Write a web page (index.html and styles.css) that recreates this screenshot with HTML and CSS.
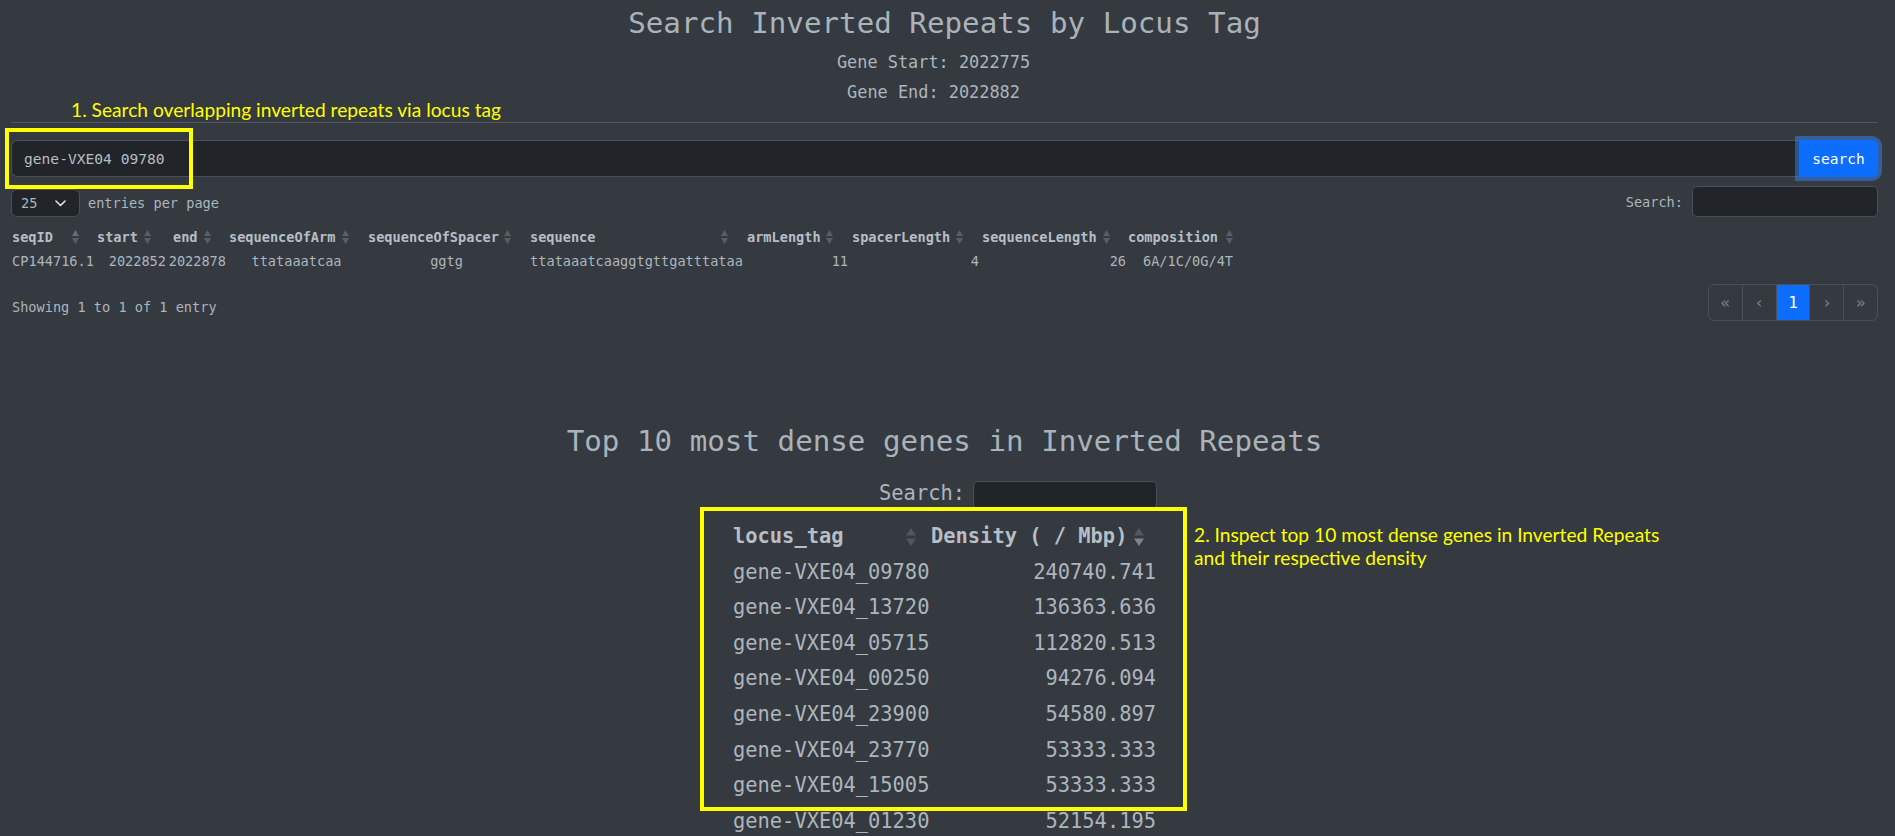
FILE: index.html
```html
<!DOCTYPE html>
<html lang="en">
<head>
<meta charset="utf-8">
<title>Search Inverted Repeats by Locus Tag</title>
<link rel="stylesheet" href="styles.css">
</head>
<body>
<main class="page">
  <header class="intro">
    <h1 class="title">Search Inverted Repeats by Locus Tag</h1>
    <p class="gene-line gene-start">Gene Start: 2022775</p>
    <p class="gene-line">Gene End: 2022882</p>
  </header>
  <hr class="rule">
  <form class="locus-form">
    <input class="locus-input" type="text" value="gene-VXE04_09780">
    <button class="btn-search" type="button">search</button>
  </form>

  <div class="dt-top">
    <div class="length">
      <span class="select">25<svg class="chev" width="11" height="7" viewBox="0 0 11 7"><path d="M1 1l4.5 4.5L10 1" fill="none" stroke="#dee2e6" stroke-width="1.6" stroke-linecap="round" stroke-linejoin="round"/></svg></span>
      <span>entries per page</span>
    </div>
    <label class="dt-search">Search:<span class="search-box"></span></label>
  </div>

  <div class="ir-table">
    <div class="th">seqID<svg class="sort" width="7" height="14" viewBox="0 0 7 14"><polygon points="0,6 3.5,0 7,6" class="s-up"/><polygon points="0,8 3.5,14 7,8"/></svg></div>
    <div class="th">start<svg class="sort" width="7" height="14" viewBox="0 0 7 14"><polygon points="0,6 3.5,0 7,6"/><polygon points="0,8 3.5,14 7,8"/></svg></div>
    <div class="th">end<svg class="sort" width="7" height="14" viewBox="0 0 7 14"><polygon points="0,6 3.5,0 7,6"/><polygon points="0,8 3.5,14 7,8"/></svg></div>
    <div class="th">sequenceOfArm<svg class="sort" width="7" height="14" viewBox="0 0 7 14"><polygon points="0,6 3.5,0 7,6"/><polygon points="0,8 3.5,14 7,8"/></svg></div>
    <div class="th">sequenceOfSpacer<svg class="sort" width="7" height="14" viewBox="0 0 7 14"><polygon points="0,6 3.5,0 7,6"/><polygon points="0,8 3.5,14 7,8"/></svg></div>
    <div class="th">sequence<svg class="sort" width="7" height="14" viewBox="0 0 7 14"><polygon points="0,6 3.5,0 7,6"/><polygon points="0,8 3.5,14 7,8"/></svg></div>
    <div class="th">armLength<svg class="sort" width="7" height="14" viewBox="0 0 7 14"><polygon points="0,6 3.5,0 7,6"/><polygon points="0,8 3.5,14 7,8"/></svg></div>
    <div class="th">spacerLength<svg class="sort" width="7" height="14" viewBox="0 0 7 14"><polygon points="0,6 3.5,0 7,6"/><polygon points="0,8 3.5,14 7,8"/></svg></div>
    <div class="th">sequenceLength<svg class="sort" width="7" height="14" viewBox="0 0 7 14"><polygon points="0,6 3.5,0 7,6"/><polygon points="0,8 3.5,14 7,8"/></svg></div>
    <div class="th">composition<svg class="sort" width="7" height="14" viewBox="0 0 7 14"><polygon points="0,6 3.5,0 7,6"/><polygon points="0,8 3.5,14 7,8"/></svg></div>

    <div class="td">CP144716.1</div>
    <div class="td num">2022852</div>
    <div class="td num">2022878</div>
    <div class="td">ttataaatcaa</div>
    <div class="td">ggtg</div>
    <div class="td">ttataaatcaaggtgttgatttataa</div>
    <div class="td num">11</div>
    <div class="td num num-tight">4</div>
    <div class="td num">26</div>
    <div class="td">6A/1C/0G/4T</div>
  </div>

  <div class="dt-bottom">
    <div class="info">Showing 1 to 1 of 1 entry</div>
    <nav class="pager">
      <span class="page-item">«</span>
      <span class="page-item">‹</span>
      <span class="page-item active">1</span>
      <span class="page-item">›</span>
      <span class="page-item">»</span>
    </nav>
  </div>

  <section class="dense">
    <h2 class="title">Top 10 most dense genes in Inverted Repeats</h2>
    <div class="dense-wrap">
      <label class="dt-search dense-search">Search:<span class="search-box"></span></label>
      <div class="dense-table">
        <div class="dth">locus_tag<svg class="sort2" width="10" height="18" viewBox="0 0 10 18"><polygon points="0,7.5 5,0 10,7.5"/><polygon points="0,10.5 5,18 10,10.5"/></svg></div>
        <div class="dth dth-2">Density ( / Mbp)<svg class="sort2" width="10" height="18" viewBox="0 0 10 18"><polygon points="0,7.5 5,0 10,7.5"/><polygon points="0,10.5 5,18 10,10.5" class="s-active"/></svg></div>

        <div class="dtd">gene-VXE04_09780</div><div class="dtd dnum">240740.741</div>
        <div class="dtd">gene-VXE04_13720</div><div class="dtd dnum">136363.636</div>
        <div class="dtd">gene-VXE04_05715</div><div class="dtd dnum">112820.513</div>
        <div class="dtd">gene-VXE04_00250</div><div class="dtd dnum">94276.094</div>
        <div class="dtd">gene-VXE04_23900</div><div class="dtd dnum">54580.897</div>
        <div class="dtd">gene-VXE04_23770</div><div class="dtd dnum">53333.333</div>
        <div class="dtd">gene-VXE04_15005</div><div class="dtd dnum">53333.333</div>
        <div class="dtd">gene-VXE04_01230</div><div class="dtd dnum">52154.195</div>
      </div>
    </div>
  </section>

  <div class="note note-1">1. Search overlapping inverted repeats via locus tag</div>
  <div class="hl hl-1"></div>
  <div class="note note-2">2. Inspect top 10 most dense genes in Inverted Repeats<br>and their respective density</div>
  <div class="hl hl-2"></div>
</main>
</body>
</html>
```

FILE: styles.css
```css
* { box-sizing: border-box; }

html, body {
  margin: 0;
  overflow: hidden;
}

body {
  background: #343a40;
  color: #adb5bd;
  font-family: "DejaVu Sans Mono", "Liberation Mono", monospace;
  font-size: 13.6px;
}

.page {
  position: relative;
  padding: 0 17px 0 11px;
}

/* ---------- header ---------- */
.intro {
  text-align: center;
  padding-top: 4px;
}

.title {
  margin: 0;
  font-size: 29.2px;
  font-weight: normal;
  line-height: 38px;
  text-align: center;
  color: #aab2ba;
}

.gene-line {
  margin: 0;
  padding-right: 22px;
  font-size: 16.9px;
  line-height: 30px;
}

.gene-start { margin-top: 5px; }

.rule {
  margin: 15px 0 17px;
  border: 0;
  border-top: 1px solid #51575e;
  height: 0;
}

/* ---------- locus search ---------- */
.locus-form {
  display: flex;
  height: 37px;
}

.locus-input {
  flex: 1;
  min-width: 0;
  height: 37px;
  background: #212529;
  border: 1px solid #495057;
  border-right: 0;
  border-radius: 6px 0 0 6px;
  color: #b5bcc3;
  font-family: inherit;
  font-size: 14.6px;
  line-height: 22px;
  padding: 6px 12px 7px;
  outline: none;
}

.btn-search {
  position: relative;
  z-index: 1;
  width: 79px;
  background: #0d6efd;
  border: 1px solid #0d6efd;
  border-radius: 0 6px 6px 0;
  color: #fff;
  font-family: inherit;
  font-size: 14.5px;
  padding: 0;
  box-shadow: 0 0 0 4px rgba(49, 132, 253, 0.5);
}

/* ---------- datatable controls ---------- */
.dt-top {
  display: flex;
  justify-content: space-between;
  align-items: flex-end;
  margin-top: 9px;
}

.length {
  display: flex;
  align-items: center;
  gap: 8px;
}

.select {
  display: flex;
  align-items: center;
  width: 69px;
  height: 28px;
  padding-left: 9px;
  background: #212529;
  border: 1px solid #495057;
  border-radius: 6px;
}

.chev {
  margin-left: auto;
  margin-right: 13px;
}

.dt-search {
  display: flex;
  align-items: center;
  gap: 9px;
}

.search-box {
  display: block;
  width: 186px;
  height: 31px;
  background: #212529;
  border: 1px solid #495057;
  border-radius: 5px;
}

/* ---------- inverted repeats table ---------- */
.ir-table {
  display: grid;
  grid-template-columns: 86px 72px 60px 137px 163px 217px 105px 130px 148px 120px;
  margin: 8px 0 0 -1px;
  line-height: 24px;
}

.th {
  display: flex;
  align-items: center;
  justify-content: space-between;
  padding: 0 17.5px 0 2px;
  font-weight: bold;
  color: #b7bec5;
  white-space: nowrap;
}

.th:nth-child(2) { padding-left: 1px; }
.th:nth-child(3) { padding-left: 5px; }
.th:nth-child(4) { padding-left: 1px; padding-right: 16.5px; }
.th:nth-child(5) { padding-left: 3px; }
.th:nth-child(9) { padding-right: 18.5px; }
.th:nth-child(10) { padding-left: 0; padding-right: 15.5px; }

.sort { fill: #585f66; flex: none; }
.sort .s-up { fill: #666d74; }

.td {
  text-align: center;
  white-space: nowrap;
}

.td.num {
  text-align: right;
  padding-right: 2px;
}

.td.num-tight { padding-right: 1px; }

.dt-bottom {
  display: flex;
  justify-content: space-between;
  align-items: flex-start;
  margin-top: 11px;
}

.info {
  margin: 11px 0 0 1px;
  line-height: 24px;
}

.pager {
  display: flex;
  width: 170px;
  height: 37px;
  border: 1px solid #495057;
  border-radius: 6px;
  overflow: hidden;
}

.page-item {
  flex: 1;
  display: flex;
  align-items: center;
  justify-content: center;
  color: #7b8289;
  font-size: 16px;
}

.page-item + .page-item { border-left: 1px solid #495057; }

.page-item.active {
  background: #0d6efd;
  color: #fff;
  font-size: 16px;
}

/* ---------- dense genes ---------- */
.dense { margin-top: 101px; }

.dense-wrap {
  width: 435px;
  margin: 0 auto;
  padding-right: 5px;
  font-size: 20.4px;
}

.dense-search {
  justify-content: flex-end;
  align-items: flex-start;
  gap: 8px;
  margin-top: 21px;
  line-height: 24px;
}

.dense-search .search-box {
  width: 184px;
  height: 28px;
}

.dense-table {
  display: grid;
  grid-template-columns: 198px 232px;
  grid-auto-rows: 35.6px;
  margin-top: 10px;
  line-height: 35.6px;
}

.dth {
  display: flex;
  align-items: center;
  justify-content: space-between;
  height: 36px;
  padding: 0 9.5px 0 6px;
  font-weight: bold;
  color: #b7bec5;
  white-space: nowrap;
}

.dth-2 { padding-right: 13px; }

.sort2 { fill: #50575e; flex: none; }
.sort2 .s-active { fill: #7d848b; }

.dtd {
  padding-left: 6px;
  white-space: nowrap;
}

.dtd.dnum {
  text-align: right;
  padding: 0 1px 0 0;
}

/* ---------- annotation overlays ---------- */
.note {
  position: absolute;
  color: #ffff00;
  font-family: Lato, "Open Sans", sans-serif;
  font-size: 19.2px;
  line-height: 23px;
  white-space: nowrap;
}

.note-1 { left: 71px; top: 98px; }
.note-2 { left: 1194px; top: 523px; }

.hl {
  position: absolute;
  border: 4px solid #ffff00;
}

.hl-1 { left: 5px; top: 128px; width: 188px; height: 61px; }
.hl-2 { left: 700px; top: 507px; width: 487px; height: 304px; }
```
